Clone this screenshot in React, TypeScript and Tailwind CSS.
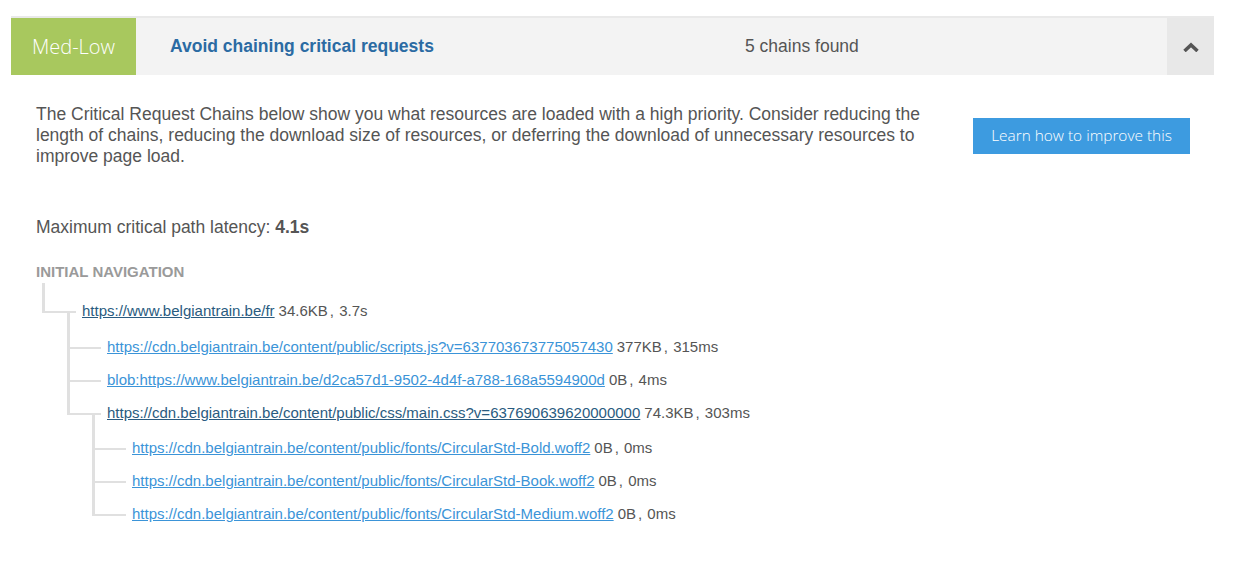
import React from 'react'

type Chain = {
  url: string
  size: string
  time: string
  children?: Chain[]
}

const tree: Chain = {
  url: 'https://www.belgiantrain.be/fr',
  size: '34.6KB',
  time: '3.7s',
  children: [
    { url: 'https://cdn.belgiantrain.be/content/public/scripts.js?v=637703673775057430', size: '377KB', time: '315ms' },
    { url: 'blob:https://www.belgiantrain.be/d2ca57d1-9502-4d4f-a788-168a5594900d', size: '0B', time: '4ms' },
    {
      url: 'https://cdn.belgiantrain.be/content/public/css/main.css?v=637690639620000000',
      size: '74.3KB',
      time: '303ms',
      children: [
        { url: 'https://cdn.belgiantrain.be/content/public/fonts/CircularStd-Bold.woff2', size: '0B', time: '0ms' },
        { url: 'https://cdn.belgiantrain.be/content/public/fonts/CircularStd-Book.woff2', size: '0B', time: '0ms' },
        { url: 'https://cdn.belgiantrain.be/content/public/fonts/CircularStd-Medium.woff2', size: '0B', time: '0ms' },
      ],
    },
  ],
}

function ChainNode({ node, root, last }: { node: Chain; root?: boolean; last?: boolean }) {
  const hasChildren = !!node.children?.length
  return (
    <li className="relative pl-[40px]">
      {/* connector lines */}
      {!last && <span className="absolute left-0 top-0 bottom-0 w-[3px] bg-[#e0e0e0]" />}
      <span
        className={
          root
            ? 'absolute left-0 top-[-11px] h-[30px] w-[34px] border-l-[3px] border-b-2 border-[#e0e0e0]'
            : 'absolute left-0 top-[-17px] h-[36px] w-[34px] border-l-[3px] border-b-2 border-[#e0e0e0]'
        }
      />
      <div className="flex h-[33px] items-center whitespace-nowrap text-[15px] leading-[17px]">
        <a href="#" className={hasChildren ? 'text-[#2a5b80] underline' : 'text-[#3b94d8] underline'}>
          {node.url}
        </a>
        <span className="ml-[4px] text-[#555]">
          {node.size}
          <span className="ml-[2px] mr-[1px]">,</span> {node.time}
        </span>
      </div>
      {hasChildren && (
        <ul className={root ? 'ml-[-15px] mt-[3px]' : 'ml-[-15px] mt-[2px]'}>
          {node.children!.map((c, i) => (
            <ChainNode key={c.url} node={c} last={i === node.children!.length - 1} />
          ))}
        </ul>
      )}
    </li>
  )
}

export default function App() {
  return (
    <div className="min-h-screen bg-white pt-[16px] font-['Liberation_Sans',Arial,sans-serif]">
      <div className="ml-[11px] w-[1203px]">
        {/* Audit header */}
        <div className="flex h-[59px] border-t-2 border-[#e9e9e9] bg-[#f3f3f3]">
          <div className="flex w-[125px] items-center justify-center bg-[#a8c85e] font-['Open_Sans',sans-serif] text-[20px] font-light text-white">
            Med-Low
          </div>
          <div className="ml-[34px] flex w-[575px] items-center text-[17.5px] font-bold text-[#2b6ba3]">
            Avoid chaining critical requests
          </div>
          <div className="flex flex-1 items-center text-[17.5px] text-[#555]">5 chains found</div>
          <div className="flex w-[47px] items-center justify-center bg-[#e8e8e8]">
            <svg width="16" height="10" viewBox="0 0 16 10" fill="none">
              <polyline points="1.5,9 8,3 14.5,9" stroke="#555" strokeWidth="3.5" />
            </svg>
          </div>
        </div>

        {/* Body */}
        <div className="pl-[25px] pt-[29px]">
          <div className="flex items-center justify-between pr-[24px]">
            <p className="w-[895px] text-[17.5px] leading-[21px] text-[#555]">
              The Critical Request Chains below show you what resources are loaded with a high priority. Consider reducing the
              length of chains, reducing the download size of resources, or deferring the download of unnecessary resources to
              improve page load.
            </p>
            <button className="h-[36px] w-[217px] bg-[#3d9be0] font-['Open_Sans',sans-serif] text-[15.4px] font-light text-white">
              Learn how to improve this
            </button>
          </div>

          <p className="mt-[50px] text-[17.5px] leading-[21px] text-[#555]">
            Maximum critical path latency: <b>4.1s</b>
          </p>

          <h3 className="mt-[25px] text-[15px] font-bold uppercase leading-[18px] text-[#9a9a9a]">Initial Navigation</h3>

          <ul className="ml-[6px] mt-[13px]">
            <ChainNode node={tree} root last />
          </ul>
        </div>
      </div>
    </div>
  )
}
